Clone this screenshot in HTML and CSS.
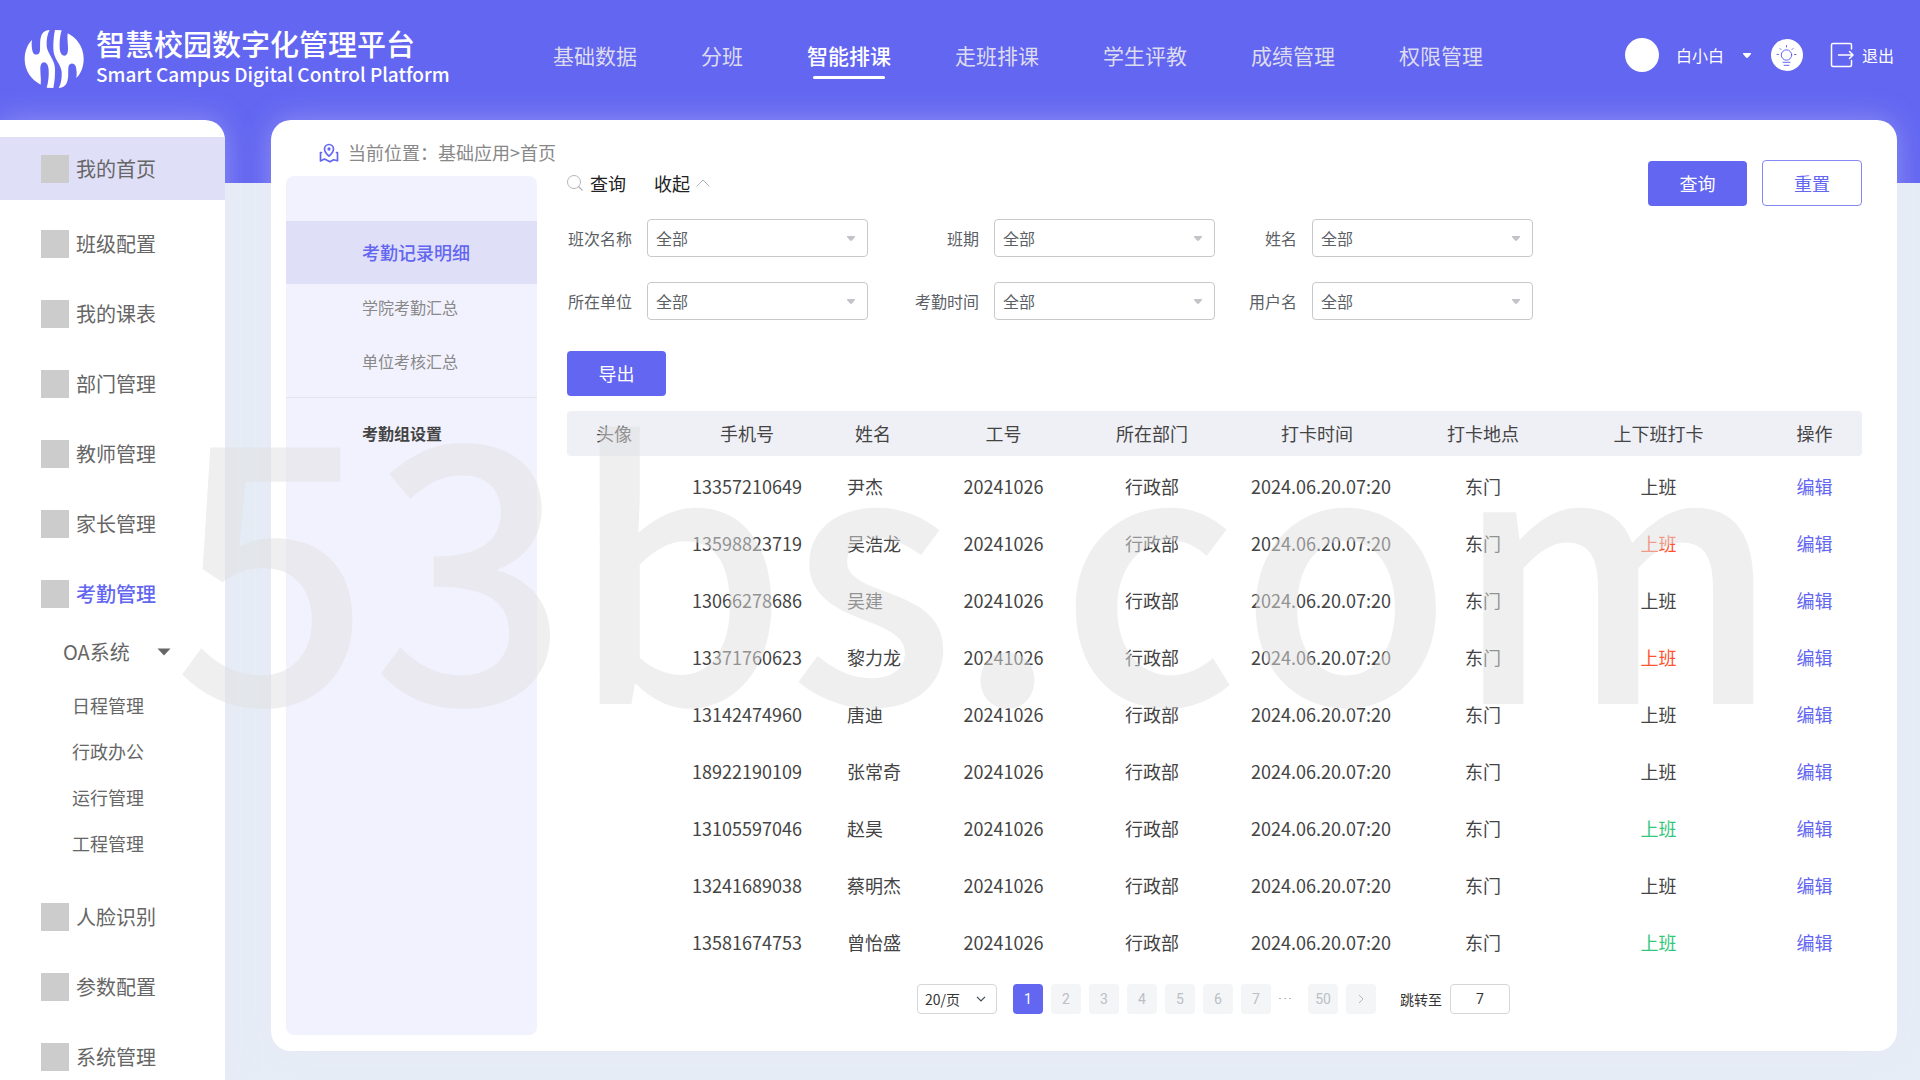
FILE: index.html
```html
<!DOCTYPE html>
<html lang="zh-CN">
<head>
<meta charset="utf-8">
<meta name="viewport" content="width=device-width, initial-scale=1">
<title>智慧校园数字化管理平台</title>
<link rel="stylesheet" href="styles.css">
</head>
<body>
<header class="header">
  <div class="brand">
    <svg class="brand-logo" viewBox="28 28 180 178" aria-hidden="true">
      <defs>
        <path id="wave" d="M52 60C50 70 51 86 54 95C57 106 72 107 75 96C78 84 74 66 79 50C83 36 92 31 105 30C98 42 95 58 96 78C98 102 121 118 121 148C121 175 119 190 116 204L96 203C101 188 103 166 102 150C101 136 96 127 88 127C80 127 77 136 77 148C77 164 80 178 78 194C50 180 30 152 30 118C30 94 38 74 52 60Z"/>
      </defs>
      <use href="#wave" fill="#fff"/>
      <use href="#wave" fill="#fff" transform="rotate(180 118.500 117)"/>
    </svg>
    <div class="brand-text">
      <h1 class="brand-title">智慧校园数字化管理平台</h1>
      <p class="brand-subtitle">Smart Campus Digital Control Platform</p>
    </div>
  </div>
  <nav class="top-nav" aria-label="主导航">
    <a class="top-link" href="#">基础数据</a>
    <a class="top-link" href="#">分班</a>
    <a class="top-link is-active" href="#">智能排课</a>
    <a class="top-link" href="#">走班排课</a>
    <a class="top-link" href="#">学生评教</a>
    <a class="top-link" href="#">成绩管理</a>
    <a class="top-link" href="#">权限管理</a>
  </nav>
  <div class="user-bar">
    <button class="user-menu" type="button">
      <span class="avatar"></span>
      <span>白小白</span>
      <svg class="caret" viewBox="0 0 8 5" aria-hidden="true"><path d="M0 0H8V1L5 4.500Q4 5.300 3 4.500L0 1Z"/></svg>
    </button>
    <button class="tips" type="button" aria-label="提示">
      <svg viewBox="0 0 32 32" fill="none" stroke="#6366f1" stroke-linecap="round" aria-hidden="true">
        <circle cx="15.500" cy="16" r="5.200"/>
        <path d="M12 23.300H19M13 26.300H18M15.500 6.500V8M9 9.500L10 10.500M22 9.500L21 10.500M6 15.500H7.500M23.500 15.500H25"/>
      </svg>
    </button>
    <a class="logout" href="#">
      <svg viewBox="0 0 24 26" fill="none" stroke="#fff" stroke-width="1.500" stroke-linecap="round" stroke-linejoin="round" aria-hidden="true">
        <path d="M21.500 7V3Q21.500 1.500 20 1.500H3Q1.500 1.500 1.500 3V23Q1.500 24.500 3 24.500H20Q21.500 24.500 21.500 23V18.500M8.500 13H22.500M19.500 9.500L23 13L19.500 16.500"/>
      </svg>
      <span>退出</span>
    </a>
  </div>
</header>

<div class="layout">
  <aside class="sidebar">
    <nav class="side-nav" aria-label="侧边导航">
      <a class="side-link is-current" href="#"><span class="side-icon"></span>我的首页</a>
      <a class="side-link" href="#"><span class="side-icon"></span>班级配置</a>
      <a class="side-link" href="#"><span class="side-icon"></span>我的课表</a>
      <a class="side-link" href="#"><span class="side-icon"></span>部门管理</a>
      <a class="side-link" href="#"><span class="side-icon"></span>教师管理</a>
      <a class="side-link" href="#"><span class="side-icon"></span>家长管理</a>
      <a class="side-link is-open" href="#"><span class="side-icon"></span>考勤管理</a>
      <div class="side-group">
        <button class="group-toggle" type="button" aria-expanded="true">OA系统
          <svg viewBox="0 0 14 8" aria-hidden="true"><path d="M0.500 0.500H13.500L7 7.500Z"/></svg>
        </button>
        <a class="group-link" href="#">日程管理</a>
        <a class="group-link" href="#">行政办公</a>
        <a class="group-link" href="#">运行管理</a>
        <a class="group-link" href="#">工程管理</a>
      </div>
      <a class="side-link" href="#"><span class="side-icon"></span>人脸识别</a>
      <a class="side-link" href="#"><span class="side-icon"></span>参数配置</a>
      <a class="side-link" href="#"><span class="side-icon"></span>系统管理</a>
    </nav>
  </aside>

  <main class="card">
    <div class="card-side">
      <div class="breadcrumb">
        <svg viewBox="0 0 20 20" fill="none" stroke="#6366f1" stroke-width="1.700" stroke-linecap="round" stroke-linejoin="round" aria-hidden="true">
          <path d="M10 13.200C7 10.500 5.500 8.400 5.500 6A4.500 4.500 0 0 1 14.500 6C14.500 8.400 13 10.500 10 13.200Z"/>
          <circle cx="10" cy="6" r="0.800"/>
          <path d="M2.500 9.500H1.500V18L5.500 16L11 18.800L14.500 16.800L18.500 17.800V9.500H17.500"/>
        </svg>
        <span>当前位置：基础应用&gt;首页</span>
      </div>
      <nav class="sub-nav" aria-label="考勤导航">
        <a class="sub-link is-active" href="#">考勤记录明细</a>
        <a class="sub-link" href="#">学院考勤汇总</a>
        <a class="sub-link" href="#">单位考核汇总</a>
        <a class="sub-heading" href="#">考勤组设置</a>
      </nav>
    </div>

    <section class="content">
      <form class="query">
        <div class="query-bar">
          <div class="query-title">
            <svg class="icon-search" viewBox="0 0 16 16" fill="none" stroke="#b4b6ba" aria-hidden="true"><circle cx="7" cy="7" r="6.500"/><path d="M11.500 11.500L15.500 15.500" stroke-width="1.300"/></svg>
            <span>查询</span>
            <button class="collapse" type="button" aria-expanded="true">收起
              <svg viewBox="0 0 14 8" fill="none" stroke="#b4b6ba" aria-hidden="true"><path d="M0.500 7.500L7 1L13.500 7.500"/></svg>
            </button>
          </div>
          <div class="query-actions">
            <button class="btn btn-primary" type="submit">查询</button>
            <button class="btn btn-outline" type="reset">重置</button>
          </div>
        </div>
        <div class="fields">
          <div class="field">
            <label for="shift">班次名称</label>
            <span class="select"><select id="shift"><option>全部</option></select><svg viewBox="0 0 8 5" aria-hidden="true"><path d="M0 0H8V1L5 4.500Q4 5.300 3 4.500L0 1Z"/></svg></span>
          </div>
          <div class="field">
            <label for="term">班期</label>
            <span class="select"><select id="term"><option>全部</option></select><svg viewBox="0 0 8 5" aria-hidden="true"><path d="M0 0H8V1L5 4.500Q4 5.300 3 4.500L0 1Z"/></svg></span>
          </div>
          <div class="field">
            <label for="name">姓名</label>
            <span class="select"><select id="name"><option>全部</option></select><svg viewBox="0 0 8 5" aria-hidden="true"><path d="M0 0H8V1L5 4.500Q4 5.300 3 4.500L0 1Z"/></svg></span>
          </div>
          <div class="field">
            <label for="unit">所在单位</label>
            <span class="select"><select id="unit"><option>全部</option></select><svg viewBox="0 0 8 5" aria-hidden="true"><path d="M0 0H8V1L5 4.500Q4 5.300 3 4.500L0 1Z"/></svg></span>
          </div>
          <div class="field">
            <label for="time">考勤时间</label>
            <span class="select"><select id="time"><option>全部</option></select><svg viewBox="0 0 8 5" aria-hidden="true"><path d="M0 0H8V1L5 4.500Q4 5.300 3 4.500L0 1Z"/></svg></span>
          </div>
          <div class="field">
            <label for="account">用户名</label>
            <span class="select"><select id="account"><option>全部</option></select><svg viewBox="0 0 8 5" aria-hidden="true"><path d="M0 0H8V1L5 4.500Q4 5.300 3 4.500L0 1Z"/></svg></span>
          </div>
        </div>
      </form>

      <button class="btn btn-primary btn-export" type="button">导出</button>

      <table class="records">
        <colgroup>
          <col class="col-photo"><col class="col-phone"><col class="col-name"><col class="col-number"><col class="col-dept"><col class="col-time"><col class="col-place"><col class="col-type"><col class="col-action">
        </colgroup>
        <thead>
          <tr><th>头像</th><th>手机号</th><th>姓名</th><th>工号</th><th>所在部门</th><th>打卡时间</th><th>打卡地点</th><th>上下班打卡</th><th>操作</th></tr>
        </thead>
        <tbody>
          <tr><td></td><td>13357210649</td><td>尹杰</td><td>20241026</td><td>行政部</td><td>2024.06.20.07:20</td><td>东门</td><td>上班</td><td><a href="#">编辑</a></td></tr>
          <tr><td></td><td>13598823719</td><td>吴浩龙</td><td>20241026</td><td>行政部</td><td>2024.06.20.07:20</td><td>东门</td><td class="late">上班</td><td><a href="#">编辑</a></td></tr>
          <tr><td></td><td>13066278686</td><td>吴建</td><td>20241026</td><td>行政部</td><td>2024.06.20.07:20</td><td>东门</td><td>上班</td><td><a href="#">编辑</a></td></tr>
          <tr><td></td><td>13371760623</td><td>黎力龙</td><td>20241026</td><td>行政部</td><td>2024.06.20.07:20</td><td>东门</td><td class="late">上班</td><td><a href="#">编辑</a></td></tr>
          <tr><td></td><td>13142474960</td><td>唐迪</td><td>20241026</td><td>行政部</td><td>2024.06.20.07:20</td><td>东门</td><td>上班</td><td><a href="#">编辑</a></td></tr>
          <tr><td></td><td>18922190109</td><td>张常奇</td><td>20241026</td><td>行政部</td><td>2024.06.20.07:20</td><td>东门</td><td>上班</td><td><a href="#">编辑</a></td></tr>
          <tr><td></td><td>13105597046</td><td>赵昊</td><td>20241026</td><td>行政部</td><td>2024.06.20.07:20</td><td>东门</td><td class="early">上班</td><td><a href="#">编辑</a></td></tr>
          <tr><td></td><td>13241689038</td><td>蔡明杰</td><td>20241026</td><td>行政部</td><td>2024.06.20.07:20</td><td>东门</td><td>上班</td><td><a href="#">编辑</a></td></tr>
          <tr><td></td><td>13581674753</td><td>曾怡盛</td><td>20241026</td><td>行政部</td><td>2024.06.20.07:20</td><td>东门</td><td class="early">上班</td><td><a href="#">编辑</a></td></tr>
        </tbody>
      </table>

      <nav class="pagination" aria-label="分页">
        <span class="page-size"><select aria-label="每页条数"><option>20/页</option></select><svg viewBox="0 0 10 6" fill="none" stroke="#404852" stroke-width="1.200" aria-hidden="true"><path d="M1 0.800L5 5L9 0.800"/></svg></span>
        <div class="pages">
          <button class="page is-active" type="button" aria-current="page">1</button>
          <button class="page" type="button">2</button>
          <button class="page" type="button">3</button>
          <button class="page" type="button">4</button>
          <button class="page" type="button">5</button>
          <button class="page" type="button">6</button>
          <button class="page" type="button">7</button>
          <span class="page-gap"><i></i><i></i><i></i></span>
          <button class="page" type="button">50</button>
          <button class="page" type="button" aria-label="下一页"><svg viewBox="0 0 6 10" fill="none" stroke="#b4b9bf" aria-hidden="true"><path d="M1 1L5 5L1 9"/></svg></button>
        </div>
        <label for="jump">跳转至</label>
        <input class="jump" id="jump" type="text" value="7">
      </nav>
    </section>
  </main>
</div>
<div class="watermark" aria-hidden="true">53bs.com</div>
</body>
</html>
```
FILE: styles.css
```css
:root {
  --primary: #6366f1;
  --tint: #dfdff7;
  --text: #444;
  --glow: 0 0 30px rgba(228, 226, 250, 0.34);
}

* {
  box-sizing: border-box;
}

body {
  position: relative;
  display: flex;
  flex-direction: column;
  min-height: 100vh;
  margin: 0;
  overflow-x: hidden;
  background: linear-gradient(var(--primary) 183px, #e7edf6 183px);
  color: var(--text);
  font: 16px/24px "Noto Sans CJK SC", sans-serif;
}

a {
  color: inherit;
  text-decoration: none;
}

button,
select,
input {
  margin: 0;
  padding: 0;
  border: 0;
  background: none;
  color: inherit;
  font: inherit;
}

button {
  cursor: pointer;
}

svg {
  display: block;
  flex: none;
}

/* Header */
.header {
  display: flex;
  align-items: center;
  height: 110px;
  margin-bottom: 10px;
  padding: 0 26px 0 24px;
  color: #fff;
}

.brand {
  display: flex;
  flex: 0 0 529px;
  align-items: center;
  gap: 12px;
  padding-top: 8px;
}

.brand-logo {
  width: 60px;
  height: 60px;
}

.brand-text {
  padding-bottom: 4px;
  font-weight: 500;
}

.brand-title {
  margin: 0;
  font-size: 29px;
  font-weight: inherit;
  line-height: 34px;
}

.brand-subtitle {
  margin: 0;
  font-size: 19px;
  line-height: 28px;
}

.top-nav {
  display: flex;
  gap: 64px;
}

.top-link {
  position: relative;
  color: #dcdcf0;
  font-size: 21px;
  line-height: 32px;
  white-space: nowrap;
}

.top-link.is-active {
  color: #fff;
  font-weight: 500;
}

.top-link.is-active::after {
  position: absolute;
  right: 6px;
  bottom: -8px;
  left: 6px;
  height: 3px;
  border-radius: 2px;
  background: #fff;
  content: "";
}

.user-bar {
  display: flex;
  align-items: center;
  margin-left: auto;
  white-space: nowrap;
}

.user-menu {
  display: flex;
  align-items: center;
  margin-right: 20px;
}

.avatar {
  width: 34px;
  height: 34px;
  margin-right: 17px;
  border-radius: 50%;
  background: #fff;
}

.caret {
  width: 8px;
  height: 5px;
  margin-left: 19px;
  fill: #fff;
}

.tips {
  width: 32px;
  height: 32px;
  margin-right: 27px;
  border-radius: 50%;
  background: #fff;
}

.logout {
  display: flex;
  align-items: center;
  gap: 8px;
}

.logout svg {
  width: 24px;
  height: 26px;
}

/* Page columns */
.layout {
  display: flex;
  flex: 1;
  gap: 46px;
  padding-right: 23px;
}

.sidebar {
  flex: 0 0 225px;
  padding-top: 17px;
  border-radius: 0 20px 0 0;
  background: #fff;
  box-shadow: var(--glow);
  color: #666;
}

.side-nav {
  display: flex;
  flex-direction: column;
  gap: 24px;
}

.side-link {
  display: flex;
  align-items: center;
  gap: 7px;
  height: 46px;
  padding-left: 41px;
  font-size: 20px;
}

.side-link.is-current {
  height: 63px;
  margin-bottom: -3px;
  background: var(--tint);
}

.side-link.is-open {
  color: var(--primary);
  font-weight: 500;
}

.side-icon {
  width: 28px;
  height: 28px;
  background: #ccc;
}

.side-group {
  display: flex;
  flex-direction: column;
  margin: -13px 0 4px;
}

.group-toggle {
  display: flex;
  align-items: center;
  gap: 27px;
  height: 48px;
  margin-bottom: 6px;
  padding-left: 63px;
  font-size: 20px;
}

.group-toggle svg {
  width: 14px;
  height: 8px;
  fill: #666;
}

.group-link {
  padding-left: 72px;
  font-size: 18px;
  line-height: 46px;
}

.card {
  display: flex;
  flex: 1;
  align-self: flex-start;
  min-width: 0;
  margin-bottom: 29px;
  padding: 0 35px 0 15px;
  border-radius: 20px;
  background: #fff;
  box-shadow: var(--glow);
}

/* Attendance menu */
.card-side {
  display: flex;
  flex: 0 0 251px;
  flex-direction: column;
  gap: 6px;
  min-width: 0;
  padding: 16px 0;
}

.breadcrumb {
  display: flex;
  align-items: center;
  gap: 9px;
  height: 34px;
  padding-left: 33px;
  color: #888;
  font-size: 18px;
  white-space: nowrap;
}

.breadcrumb span {
  padding-bottom: 2px;
}

.breadcrumb svg {
  width: 20px;
  height: 20px;
}

.sub-nav {
  flex: 1;
  padding-top: 45px;
  border-radius: 8px;
  background: #f2f2fe;
}

.sub-link,
.sub-heading {
  display: block;
  padding-left: 76px;
}

.sub-link {
  color: #888;
  line-height: 54px;
}

.sub-link.is-active {
  margin-bottom: -4px;
  background: var(--tint);
  color: var(--primary);
  font-size: 18px;
  font-weight: 500;
  line-height: 63px;
}

.sub-heading {
  margin-top: 9px;
  border-top: 1px solid #e4e4ec;
  font-weight: 700;
  line-height: 70px;
}

/* Query form */
.content {
  flex: 1;
  min-width: 0;
  margin-left: 30px;
  padding: 40px 0 37px;
}

.query-bar,
.query-title,
.query-actions {
  display: flex;
  align-items: center;
}

.query-bar {
  justify-content: space-between;
  height: 46px;
}

.query-title {
  gap: 7px;
  color: #222;
  font-size: 18px;
}

.icon-search {
  width: 16px;
  height: 16px;
}

.collapse {
  display: flex;
  align-items: center;
  gap: 6px;
  margin-left: 21px;
}

.collapse svg {
  width: 14px;
  height: 8px;
}

.query-actions {
  gap: 15px;
}

.btn {
  width: 99px;
  height: 45px;
  border-radius: 4px;
  font-size: 18px;
}

.btn-primary {
  background: var(--primary);
  color: #fff;
}

.btn-outline {
  width: 100px;
  height: 46px;
  border: 1px solid #8688f4;
  color: var(--primary);
}

.btn-export {
  display: block;
  margin: 31px 0 15px;
  padding-bottom: 2px;
}

.fields {
  display: grid;
  grid-template-columns: 301px 347px 318px;
  gap: 25px 0;
  margin-top: 13px;
  color: #5c5f66;
}

.field {
  display: flex;
  align-items: center;
  justify-content: flex-end;
  gap: 15px;
}

.select,
.page-size {
  display: grid;
  align-items: center;
}

.select > *,
.page-size > * {
  grid-area: 1 / 1;
}

.select svg,
.page-size svg {
  justify-self: end;
  pointer-events: none;
}

.select select {
  width: 221px;
  height: 38px;
  padding: 0 32px 0 8px;
  border: 1px solid #c8c9cd;
  border-radius: 4px;
  appearance: none;
}

.select svg {
  width: 8px;
  height: 5px;
  margin-right: 13px;
  fill: #c2c4c8;
}

/* Records */
.records {
  width: 100%;
  border-spacing: 0;
  font-size: 18px;
  table-layout: fixed;
}

.col-photo { width: 94px; }
.col-phone { width: 172px; }
.col-name { width: 80px; }
.col-number { width: 181px; }
.col-dept { width: 116px; }
.col-time { width: 214px; }
.col-place { width: 118px; }
.col-type { width: 233px; }
.col-action { width: 87px; }

.records th,
.records td {
  padding: 0 0 2px;
  text-align: center;
  white-space: nowrap;
}

.records th {
  height: 45px;
  background: #eff0f6;
  font-weight: 400;
}

.records th:first-child {
  border-radius: 4px 0 0 4px;
}

.records th:last-child {
  border-radius: 0 4px 4px 0;
}

.records tbody::before {
  display: block;
  height: 2px;
  content: "";
}

.records td {
  height: 57px;
}

.records td:nth-child(3) {
  padding-left: 14px;
  text-align: left;
}

.records td:nth-child(6) {
  padding-left: 8px;
}

.records th:last-child,
.records td:last-child {
  padding-right: 8px;
}

.records a {
  color: var(--primary);
}

.records .late {
  color: #ff5330;
}

.records .early {
  color: #34c77b;
}

/* Pagination */
.pagination {
  display: flex;
  align-items: center;
  margin: 13px 0 0 350px;
  color: #333;
  font-size: 14px;
}

.page-size {
  margin-right: 16px;
}

.page-size select {
  width: 80px;
  height: 30px;
  padding-left: 7px;
  border: 1px solid #d4d6da;
  border-radius: 4px;
  appearance: none;
}

.page-size svg {
  width: 10px;
  height: 6px;
  margin-right: 11px;
}

.pages {
  display: flex;
  gap: 8px;
  margin-right: 24px;
}

.page {
  display: flex;
  align-items: center;
  justify-content: center;
  width: 30px;
  height: 30px;
  border-radius: 4px;
  background: #f4f5f7;
  color: #bbbfc4;
  font-family: Roboto, sans-serif;
}

.page.is-active {
  background: var(--primary);
  color: #fff;
}

.page svg {
  width: 6px;
  height: 10px;
}

.page-gap {
  display: flex;
  gap: 3px;
  width: 21px;
  padding-top: 14px;
}

.page-gap i {
  width: 2px;
  height: 1px;
  background: #b4b9bf;
}

.jump {
  width: 60px;
  height: 30px;
  margin-left: 8px;
  border: 1px solid #d4d6da;
  border-radius: 4px;
  font-family: Roboto, sans-serif;
  text-align: center;
}

/* Watermark laid over the whole page */
.watermark {
  position: absolute;
  top: 376px;
  right: 0;
  left: 0;
  padding-left: 34px;
  color: rgba(223, 223, 223, 0.5);
  font-size: 348px;
  font-weight: 500;
  line-height: 352px;
  text-align: center;
  font-kerning: none;
  pointer-events: none;
}
```
